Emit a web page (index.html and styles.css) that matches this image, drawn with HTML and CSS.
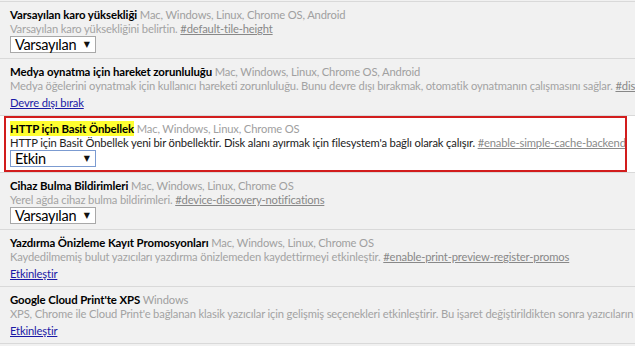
FILE: index.html
```html
<!DOCTYPE html>
<html lang="tr">
<head>
<meta charset="utf-8">
<link rel="stylesheet" href="styles.css">
</head>
<body>
<div class="flags">
  <div class="row">
    <div class="title"><b>Varsayılan karo yüksekliği</b> <span class="plat">Mac, Windows, Linux, Chrome OS, Android</span></div>
    <div class="desc">Varsayılan karo yüksekliğini belirtin. <a class="hash">#default-tile-height</a></div>
    <div class="ctrl"><span class="select"><span class="val">Varsayılan</span><span class="arrow">▼</span></span></div>
  </div>
  <div class="row">
    <div class="title"><b>Medya oynatma için hareket zorunluluğu</b> <span class="plat">Mac, Windows, Linux, Chrome OS, Android</span></div>
    <div class="desc">Medya öğelerini oynatmak için kullanıcı hareketi zorunluluğu. Bunu devre dışı bırakmak, otomatik oynatmanın çalışmasını sağlar. <a class="hash">#disable-gesture-requirement-for-media-playback</a></div>
    <div class="ctrl"><a class="action">Devre dışı bırak</a></div>
  </div>
  <div class="row hl">
    <div class="box">
      <div class="title"><b class="mark">HTTP için Basit Önbellek</b> <span class="plat">Mac, Windows, Linux, Chrome OS</span></div>
      <div class="desc">HTTP için Basit Önbellek yeni bir önbellektir. Disk alanı ayırmak için filesystem'a bağlı olarak çalışır. <a class="hash">#enable-simple-cache-backend</a></div>
      <div class="ctrl"><span class="select focus"><span class="val">Etkin</span><span class="arrow">▼</span></span></div>
    </div>
  </div>
  <div class="row">
    <div class="title"><b>Cihaz Bulma Bildirimleri</b> <span class="plat">Mac, Windows, Linux, Chrome OS</span></div>
    <div class="desc">Yerel ağda cihaz bulma bildirimleri. <a class="hash">#device-discovery-notifications</a></div>
    <div class="ctrl"><span class="select"><span class="val">Varsayılan</span><span class="arrow">▼</span></span></div>
  </div>
  <div class="row">
    <div class="title"><b>Yazdırma Önizleme Kayıt Promosyonları</b> <span class="plat">Mac, Windows, Linux, Chrome OS</span></div>
    <div class="desc">Kaydedilmemiş bulut yazıcıları yazdırma önizlemeden kaydettirmeyi etkinleştir. <a class="hash">#enable-print-preview-register-promos</a></div>
    <div class="ctrl"><a class="action">Etkinleştir</a></div>
  </div>
  <div class="row">
    <div class="title"><b>Google Cloud Print'te XPS</b> <span class="plat">Windows</span></div>
    <div class="desc">XPS, Chrome ile Cloud Print'e bağlanan klasik yazıcılar için gelişmiş seçenekleri etkinleştirir. Bu işaret değiştirildikten sonra yazıcıların yeniden bağlanması gerekir. <a class="hash">#enable-cloud-print-xps</a></div>
    <div class="ctrl"><a class="action">Etkinleştir</a></div>
  </div>
  <div class="row last"></div>
</div>
</body>
</html>
```

FILE: styles.css
```css
html, body {
  margin: 0;
  padding: 0;
  background: #f1f1f1;
  overflow: hidden;
}
body {
  font-family: Lato, "Open Sans", sans-serif;
  font-size: 11.2px;
  letter-spacing: -0.15px;
  color: #999;
}
.flags {
  padding-top: 1px;
}
.row {
  border-top: 1px solid #d9d9d9;
  height: 57px;
  box-sizing: border-box;
  padding: 5px 0 0 10px;
  white-space: nowrap;
  overflow: hidden;
}
.row.hl {
  padding: 0;
  background: #fff;
}
.box {
  margin: 0 8px 0 4px;
  height: 56px;
  box-sizing: border-box;
  border: 2px solid #d21d1d;
  padding: 3px 0 0 4px;
  overflow: hidden;
}
.title {
  line-height: 15px;
  height: 15px;
}
.title b {
  color: #000;
  font-weight: 700;
  font-size: 11.4px;
  letter-spacing: -0.1px;
}
.mark {
  background: #ffff30;
  padding: 1px 0;
}
.plat {
  color: #a0a0a0;
}
.desc {
  line-height: 14px;
  height: 14px;
  color: #a3a3a3;
}
.hl .desc {
  color: #222;
}
.hash {
  color: #888;
  text-decoration: underline;
}
.hl .hash {
  color: #8a8a8a;
}
.ctrl {
  height: 19px;
  line-height: 19px;
}
.action {
  color: #1a1aa6;
  text-decoration: underline;
}
.select {
  display: inline-flex;
  align-items: center;
  justify-content: space-between;
  box-sizing: border-box;
  width: 86px;
  height: 17px;
  padding: 0 5px 0 4px;
  background: #fff;
  border: 1px solid #a8a8a8;
  font-family: Lato, "Liberation Sans", sans-serif;
  font-size: 14.5px;
  letter-spacing: -0.3px;
  color: #000;
  line-height: 15px;
  white-space: nowrap;
  vertical-align: top;
}
.select.focus {
  border-color: #7b9bd1;
}
.arrow {
  font-family: "DejaVu Sans", sans-serif;
  font-size: 8px;
  letter-spacing: 0;
  color: #111;
}
```
